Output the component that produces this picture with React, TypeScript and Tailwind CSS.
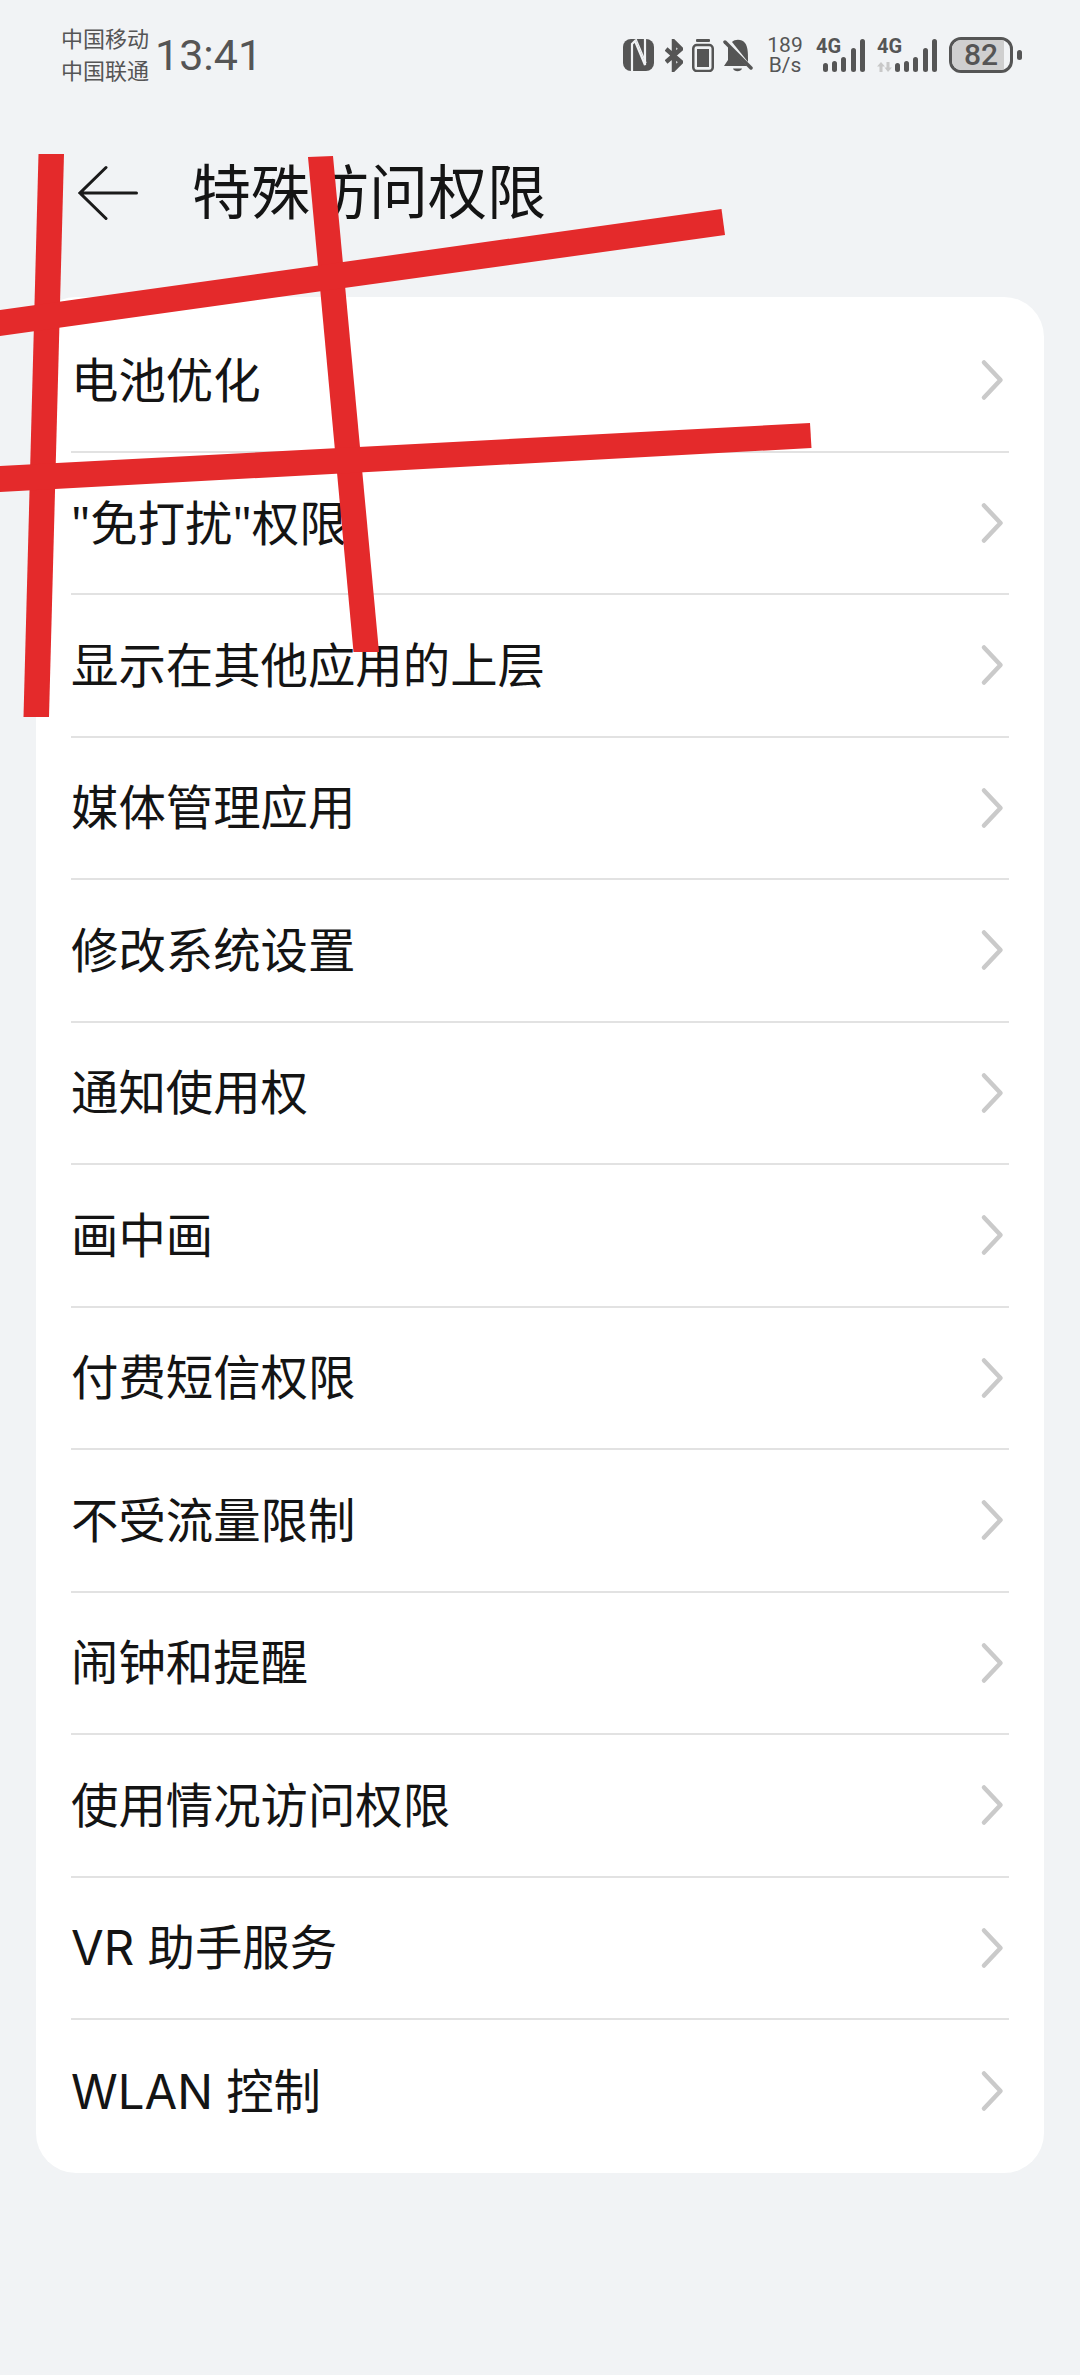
import React from 'react';

const items = [
  '电池优化',
  '"免打扰"权限',
  '显示在其他应用的上层',
  '媒体管理应用',
  '修改系统设置',
  '通知使用权',
  '画中画',
  '付费短信权限',
  '不受流量限制',
  '闹钟和提醒',
  '使用情况访问权限',
  'VR 助手服务',
  'WLAN 控制',
];

const barHeights = [9, 11, 15, 24, 33];

const SignalBars = () => (
  <div className="absolute right-0 bottom-0 flex items-end gap-[4.3px]">
    {barHeights.map((h, i) => (
      <div key={i} className="w-[5px] rounded-full bg-[#555555]" style={{ height: h }} />
    ))}
  </div>
);

const StatusIcons = () => (
  <div className="flex items-center text-[#555555]" style={{ fontFamily: 'Roboto, sans-serif' }}>
    {/* nfc */}
    <svg width="31" height="32" viewBox="0 0 31 32" className="mr-[11px]">
      <rect width="31" height="32" rx="8" fill="#555555" />
      <path d="M9 32 L9 5 L12 2 L22 26 L22 0" fill="none" stroke="#f1f3f5" strokeWidth="2.2" />
      <path d="M13 0 L23 24" fill="none" stroke="#f1f3f5" strokeWidth="1.4" />
    </svg>
    {/* bluetooth */}
    <svg width="18" height="33" viewBox="0 0 18 33" className="mr-[9px]">
      <path d="M1 10 L16 23 L9 30 L9 3 L16 10 L1 23" fill="none" stroke="#555555" strokeWidth="4.5" />
    </svg>
    {/* battery saver */}
    <svg width="22" height="33" viewBox="0 0 22 33" className="mr-[9px]">
      <rect x="4" y="0" width="14" height="3" rx="1" fill="#555555" />
      <rect x="1.25" y="6" width="19.5" height="26" rx="3.5" fill="none" stroke="#555555" strokeWidth="2.5" />
      <rect x="5" y="10" width="12" height="18" fill="#555555" />
    </svg>
    {/* bell off */}
    <svg width="30" height="33" viewBox="0 0 30 33" className="mr-[15px]">
      <path d="M5 7 L5 21 L1 27 L24 27 Z" fill="#555555" />
      <path d="M9 3 C12 0 19 0 22 4 C25 8 25 14 25 23 Z" fill="#555555" />
      <path d="M10 29.5 L19 29.5 C18 33 11 33 10 29.5 Z" fill="#555555" />
      <path d="M2 3 L28 29" stroke="#555555" strokeWidth="3.5" strokeLinecap="round" />
    </svg>
    {/* net speed */}
    <div className="mr-[14px] flex w-[34px] flex-col items-center text-[21px] leading-[20px]">
      <span>189</span>
      <span>B/s</span>
    </div>
    {/* sim 1 */}
    <div className="relative mr-[12px] h-[34px] w-[49px]">
      <span className="absolute top-0 left-0 text-[20px] leading-[16px] font-bold">4G</span>
      <SignalBars />
    </div>
    {/* sim 2 */}
    <div className="relative mr-[12px] h-[34px] w-[60px]">
      <span className="absolute top-0 left-0 text-[20px] leading-[16px] font-bold">4G</span>
      <svg width="15" height="10" viewBox="0 0 15 10" className="absolute bottom-0 left-0">
        <path d="M4 0 L8 4.5 L5.5 4.5 L5.5 10 L2.5 10 L2.5 4.5 L0 4.5 Z" fill="#c8c8c8" />
        <path d="M11 10 L15 5.5 L12.5 5.5 L12.5 0 L9.5 0 L9.5 5.5 L7.5 5.5 Z" fill="#c8c8c8" />
      </svg>
      <SignalBars />
    </div>
    {/* battery */}
    <div className="relative mr-[4px] flex h-[36px] w-[64px] items-center justify-center overflow-hidden rounded-[12px] border-[3px] border-[#555555] text-[30px] leading-none font-medium">
      <div className="absolute inset-y-0 left-0 w-[90%] bg-[#cfcfcf]" />
      <span className="relative">82</span>
    </div>
    <div className="h-[10px] w-[5px] rounded-full bg-[#555555]" />
  </div>
);

export default function App() {
  return (
    <div
      className="relative h-[2375px] w-[1080px] overflow-hidden bg-[#f1f3f5] text-[#141414]"
      style={{ fontFamily: 'Inter, "Noto Sans CJK SC", sans-serif' }}
    >
      {/* status bar */}
      <div className="flex h-[110px] items-center justify-between pr-[58px] pl-[61px] text-[#555555]">
        <div className="flex items-center gap-[6px]">
          <div className="text-[22px] leading-[32px]">
            <div>中国移动</div>
            <div>中国联通</div>
          </div>
          <span className="text-[43px] leading-none" style={{ fontFamily: 'Roboto, sans-serif' }}>13:41</span>
        </div>
        <StatusIcons />
      </div>

      {/* title bar */}
      <div className="flex h-[187px] items-center pb-[22px] pl-[78px]">
        <svg width="62" height="56" viewBox="0 0 62 56" className="mr-[52px]">
          <path d="M28 2.5 L2 28 L28 53.5 M2 28 L58.5 28" fill="none" stroke="#1a1a1a" strokeWidth="3" strokeLinecap="round" />
        </svg>
        <h1 className="text-[59px] leading-none font-normal">特殊访问权限</h1>
      </div>

      {/* list */}
      <div className="mx-[36px] rounded-[40px] bg-white px-[35px] pt-[13px] pb-[10px]">
        {items.map((label, i) => (
          <div
            key={label}
            className={`flex h-[142.5px] items-center justify-between pr-[5px] ${i < items.length - 1 ? 'border-b-2 border-[#e2e2e2]' : ''}`}
          >
            <span
              className="text-[47.4px] leading-none"
              style={label.startsWith('"') ? { fontFamily: '"Noto Sans", "Noto Sans CJK SC", sans-serif' } : undefined}
            >
              {label}
            </span>
            <svg width="24" height="42" viewBox="0 0 24 42">
              <path d="M4 3.5 L20.5 21 L4 38.5" fill="none" stroke="#cacaca" strokeWidth="4.5" strokeLinecap="round" strokeLinejoin="round" />
            </svg>
          </div>
        ))}
      </div>

      {/* red marker strokes over the top of the page */}
      <svg className="absolute top-0 left-0" width="1080" height="800" viewBox="0 0 1080 800">
        <g fill="#e42a2b">
          <polygon points="38.5,154 64,154 49,717 23.5,717" />
          <polygon points="308,157 333,156 379,652 353.5,652" />
          <polygon points="0,310 721.5,209 725,235 0,336" />
          <polygon points="0,466 810,423 811.5,448 0,492" />
        </g>
      </svg>
    </div>
  );
}
